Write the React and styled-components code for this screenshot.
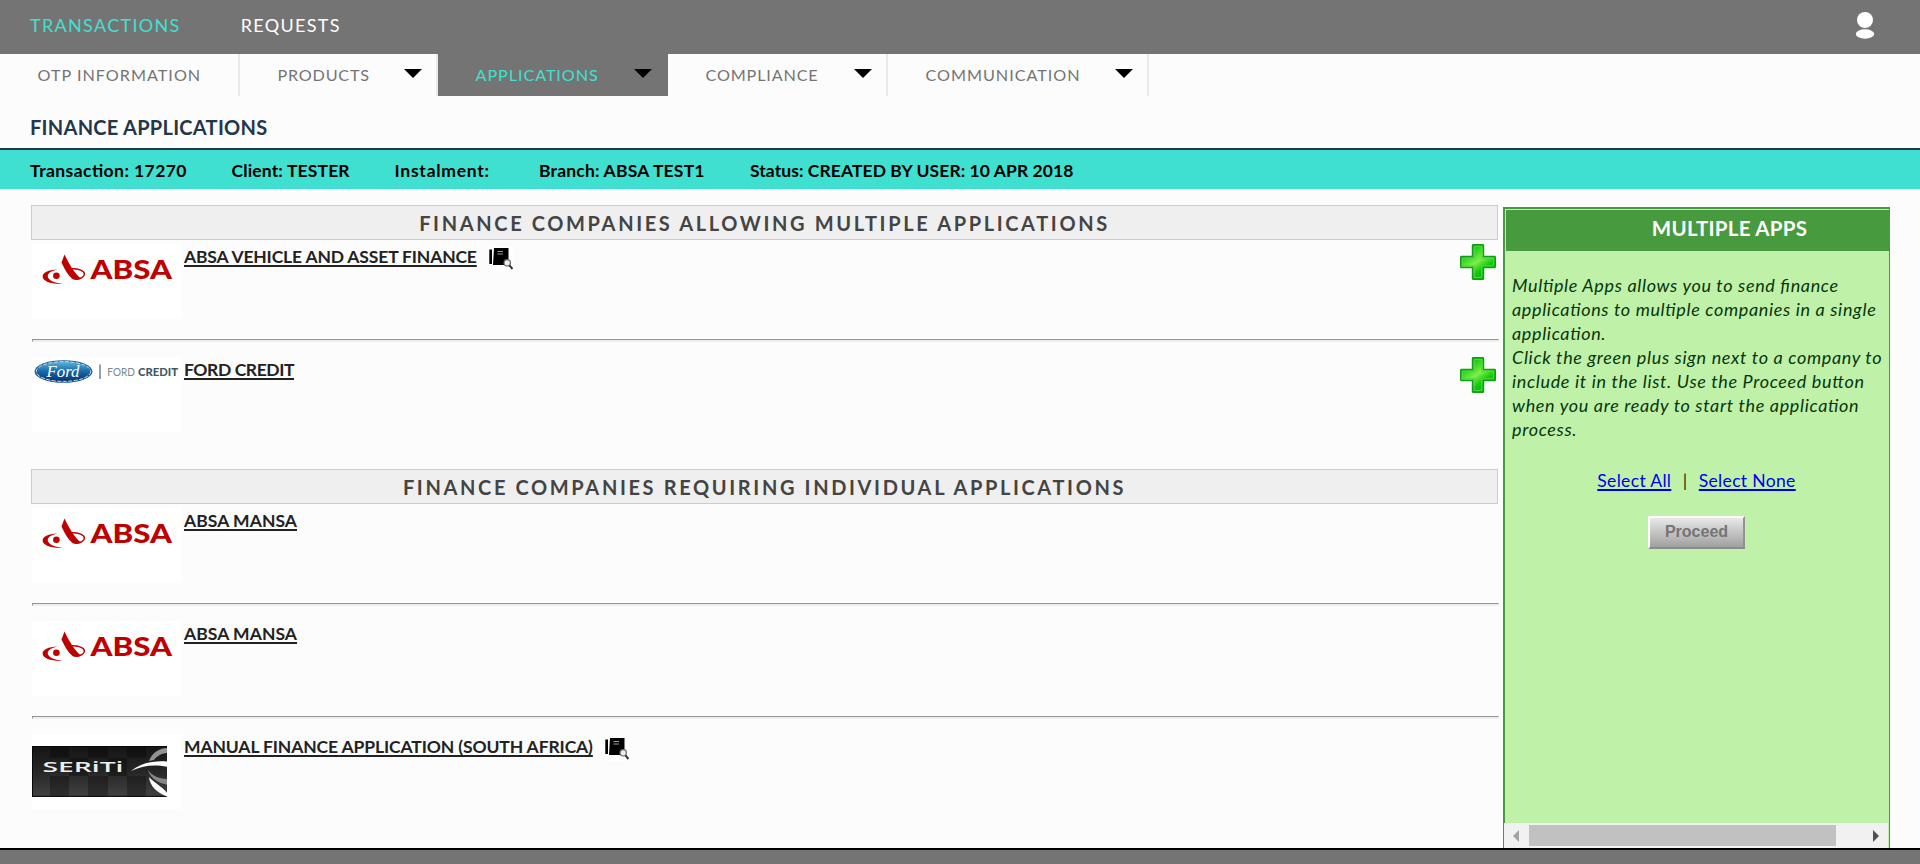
import React from 'react';
import styled, { createGlobalStyle, css } from 'styled-components';

const Global = createGlobalStyle`
  *, *::before, *::after { box-sizing: border-box; }
  body {
    margin: 0;
    background: #fcfcfc;
    font-family: Lato, "Liberation Sans", sans-serif;
    font-feature-settings: "liga" 1;
    color: #000;
    overflow: hidden;
  }
`;

const tracked = css`letter-spacing: ${(p) => p.$track || 0}px;`;

const Page = styled.div`
  display: flex;
  flex-direction: column;
  height: 864px;
`;

const TopBar = styled.header`
  display: flex;
  align-items: center;
  justify-content: space-between;
  flex: none;
  height: 54px;
  padding: 0 45px 4px 30px;
  background: #747474;
`;

const TopNav = styled.nav`
  display: flex;
  gap: 60px;
`;

const TopLink = styled.a`
  font-size: 18px;
  line-height: 24px;
  letter-spacing: 1.32px;
  color: ${(p) => (p.$active ? '#40e0d0' : '#fff')};
`;

const Tabs = styled.nav`
  display: flex;
  flex: none;
  height: 42px;
`;

const Tab = styled.a`
  display: flex;
  justify-content: space-between;
  width: ${(p) => p.$width}px;
  padding: 9px 14px 0 37.5px;
  border-right: 2px solid ${(p) => (p.$active ? '#747474' : '#e8e8e8')};
  background: ${(p) => (p.$active ? '#747474' : 'transparent')};
  color: ${(p) => (p.$active ? '#40e0d0' : '#747474')};
  font-size: 16.2px;
  line-height: 24px;
  white-space: nowrap;
  ${tracked}
`;

const Caret = styled.span`
  width: 0;
  height: 0;
  margin-top: 6px;
  border: 9px solid transparent;
  border-top-color: #000;
  border-bottom: 0;
`;

const Title = styled.h1`
  flex: none;
  height: 54px;
  margin: 0;
  padding: 18px 30px 0;
  border-bottom: 2px solid #24394d;
  color: #24364a;
  font-size: 20px;
  line-height: 26px;
  letter-spacing: 0.27px;
`;

const InfoBar = styled.div`
  display: grid;
  grid-template-columns: 201.5px 163px 144.5px 211px auto;
  flex: none;
  height: 39px;
  padding: 9px 30px 0;
  background: #40e0d0;
  font-size: 17.5px;
  font-weight: 700;
  line-height: 24px;
`;

const InfoItem = styled.span`
  white-space: nowrap;
  ${tracked}
`;

const Body = styled.div`
  display: flex;
  gap: 4px;
  flex: 1;
  min-height: 0;
  padding: 16px 30px 0 31px;
`;

const Companies = styled.main`
  display: flex;
  flex-direction: column;
  gap: 37px;
  width: 1468px;
`;

const SectionTitle = styled.h2`
  height: 35px;
  margin: 0 1px 4px 0;
  border: 1px solid #ccc;
  background: #efefef;
  color: #444;
  font-size: 20px;
  line-height: 34px;
  text-align: center;
  ${tracked}
`;

const Company = styled.article`
  display: flex;
  align-items: flex-start;
  height: 75px;
  margin-left: 1px;
  padding-right: 3px;
`;

const LogoBox = styled.div`
  width: 150px;
  height: 75px;
  margin-right: 2px;
  background: #fff;
`;

const CompanyLink = styled.a`
  margin-top: 1px;
  color: #222;
  font-size: 17.5px;
  font-weight: 700;
  line-height: 24px;
  text-decoration: underline;
  text-decoration-thickness: 2px;
  text-underline-offset: 2px;
  text-decoration-skip-ink: none;
  ${tracked}
`;

const Details = styled.span`
  width: 24px;
  height: 24px;
  margin: 3px 0 0 12px;
  background: #fff;
`;

const AddButton = styled.span`
  width: 36px;
  height: 36px;
  margin-left: auto;
`;

const Divider = styled.hr`
  height: 3px;
  margin: 20px 0 15px 1px;
  border: 1px solid #eee;
  border-top-color: #949494;
  border-left-color: #949494;
  background: #eee;
`;

const Panel = styled.aside`
  display: flex;
  flex-direction: column;
  width: 387px;
  margin-top: 2px;
  border: 2px solid #479a3e;
  border-right-width: 1px;
  border-bottom: 0;
  background: #bff2a8;
`;

const PanelTitle = styled.h2`
  height: 41px;
  margin: 1px 0 0 1px;
  padding: 5px 0 0 64px;
  background: #479a3e;
  color: #fff;
  font-size: 20.5px;
  line-height: 26px;
  letter-spacing: 0.25px;
  text-align: center;
`;

const Help = styled.p`
  margin: 22px 0 0;
  padding-left: 7px;
  color: #07360d;
  font-size: 18px;
  font-style: italic;
  line-height: 24px;
  letter-spacing: 0.65px;
  white-space: pre-line;
`;

const Choices = styled.div`
  display: flex;
  justify-content: center;
  gap: 11.5px;
  margin-top: 28px;
  padding-right: 1px;
  color: #07360d;
  font-size: 17.6px;
  line-height: 24px;
`;

const Choice = styled.a`
  color: #00e;
  letter-spacing: 0.3px;
  text-decoration: underline;
  text-decoration-thickness: 2px;
  text-underline-offset: 2px;
`;

const Proceed = styled.button`
  align-self: center;
  width: 97px;
  height: 33px;
  margin: 23px 1px 0 0;
  padding: 0 0 2px;
  border: 2px solid #fff;
  border-right-color: #929292;
  border-bottom-color: #8c8c8c;
  background: linear-gradient(#e8e8e8, #a0a0a0);
  color: #747474;
  font: 700 16px "Liberation Sans", Arial, sans-serif;
`;

const ScrollBar = styled.div`
  display: flex;
  align-items: center;
  height: 25px;
  margin: auto 1px 0 -1px;
  padding: 0 9px;
  background: #f1f1f1;
`;

const ScrollThumb = styled.div`
  width: 307px;
  height: 21px;
  margin: 0 auto 0 10px;
  background: #c1c1c1;
`;

const ScrollArrow = styled.span`
  width: 0;
  height: 0;
  border: 6px solid transparent;
  border-width: 6px 0;
  ${(p) => (p.$right ? 'border-left: 6px solid #505050;' : 'border-right: 6px solid #a3a3a3;')}
`;

const Footer = styled.footer`
  flex: none;
  height: 16px;
  border-top: 2px solid #000;
  background: #747474;
`;

const UserIcon = () => (
  <svg width="20" height="28" viewBox="0 0 20 28" fill="#fff">
    <circle cx="10" cy="9" r="8" />
    <ellipse cx="10" cy="23" rx="9.2" ry="4.7" />
  </svg>
);

const AbsaLogo = () => (
  <svg width="150" height="75" viewBox="0 0 150 75" fill="#be0000">
    <path d="M26 25.6C16 25.8 10.5 29 10.6 32.8C11 37.5 20 40.6 31.5 39.8C23 39 16.5 36.5 15.8 32.7C15.4 29 19 27.2 26 25.6Z" />
    <circle cx="24.4" cy="31.8" r="3.3" />
    <path d="M32.5 10.5L29.5 18.5C33 26 36 31.5 40.5 35Q44.5 37.4 49 34.2C43.5 31 37 20 32.5 10.5Z" />
    <path d="M38.5 24.8C47 24.4 52.5 27 52.4 30C52.2 33 48.5 35.2 44.5 35.2" fill="none" stroke="#be0000" strokeWidth="1.5" />
    <text x="58.5" y="34.8" fontFamily="Lato" fontWeight="900" fontSize="27" textLength="81.5" lengthAdjust="spacingAndGlyphs">ABSA</text>
  </svg>
);

const FordLogo = () => (
  <svg width="150" height="75" viewBox="0 0 150 75">
    <defs>
      <linearGradient id="ford" x1="0" y1="0" x2="0" y2="1">
        <stop offset="0" stopColor="#5fb4dc" />
        <stop offset="0.45" stopColor="#1b6fae" />
        <stop offset="1" stopColor="#0a2f6c" />
      </linearGradient>
    </defs>
    <ellipse cx="31.5" cy="14.5" rx="29" ry="11.3" fill="#1c5c98" />
    <ellipse cx="31.5" cy="14.5" rx="27.2" ry="9.9" fill="url(#ford)" stroke="#c5dfee" strokeWidth="1" strokeDasharray="4 1.5" />
    <text x="14.5" y="19.5" fill="#fff" fontFamily="Liberation Serif" fontStyle="italic" fontWeight="400" fontSize="17" textLength="33" lengthAdjust="spacingAndGlyphs">Ford</text>
    <path d="M68 7.5V22" stroke="#47657b" strokeWidth="1.2" />
    <text x="75.3" y="18.7" fill="#778894" fontFamily="Lato" fontSize="11" textLength="27.5" lengthAdjust="spacingAndGlyphs">FORD</text>
    <text x="106" y="18.7" fill="#3f5868" fontFamily="Lato" fontWeight="900" fontSize="11" textLength="40" lengthAdjust="spacingAndGlyphs">CREDIT</text>
  </svg>
);

const SeritiLogo = () => (
  <svg width="150" height="75" viewBox="0 0 150 75">
    <defs>
      <linearGradient id="seriti" x1="0" y1="0" x2="0" y2="1">
        <stop offset="0" stopColor="#151515" />
        <stop offset="0.5" stopColor="#262626" />
        <stop offset="1" stopColor="#424242" />
      </linearGradient>
      <clipPath id="plate"><path d="M0 12H135V63H0Z" /></clipPath>
    </defs>
    <path d="M0 12H135V63H0Z" fill="url(#seriti)" />
    <path d="M18 12H37V24H18ZM56 12H76V24H56ZM95 12H114V24H95ZM37 24H56V42H37ZM76 24H95V42H76ZM18 42H37V62H18ZM56 42H76V62H56ZM95 42H114V62H95Z" fill="#000" opacity="0.28" />
    <path d="M0 12.5H135M0.5 12V63M0 62.3H135" stroke="#080808" fill="none" />
    <g clipPath="url(#plate)">
      <path d="M117 27C120 19 127 14 136 14V19C130 19 125 22 122 26Z" fill="#919295" />
      <path d="M116 36C120 42 127 45 136 45V51C126 49 118 44 116 36Z" fill="#85868a" />
      <path d="M99 37C109 29 122 26 136 27.5V33C121 30 110 32 99 37Z" fill="#fff" />
      <path d="M117 43C122 49 130 52 136 60V63C126 59 118 53 117 43Z" fill="#fff" />
    </g>
    <text x="10.5" y="38.3" fill="#eee" fontFamily="Open Sans" fontWeight="600" fontSize="13.8" textLength="81" lengthAdjust="spacingAndGlyphs">SERiTi</text>
  </svg>
);

const DetailsIcon = () => (
  <svg width="24" height="24" viewBox="0 0 24 24">
    <path d="M0.3 2.5H3V17H0.3ZM5 1H19.5V13L15.5 18H4Z" fill="#000" />
    <path d="M8.5 4.5H14M8.5 7H14" stroke="#999" />
    <circle cx="18.2" cy="15.8" r="3.2" fill="#eee" stroke="#666" strokeWidth="1.2" />
    <path d="M20.5 18.3L23.5 22" stroke="#333" strokeWidth="2" />
  </svg>
);

const PlusIcon = () => (
  <svg width="36" height="36" viewBox="0 0 36 36">
    <defs>
      <linearGradient id="plus" x1="0.15" y1="0" x2="0.85" y2="1">
        <stop offset="0.15" stopColor="#08c808" />
        <stop offset="0.48" stopColor="#80ee48" />
        <stop offset="0.7" stopColor="#10c80c" />
        <stop offset="1" stopColor="#04b404" />
      </linearGradient>
    </defs>
    <path d="M13 0.7H23L23.5 1.2V12.5H34.8L35.3 13V23L34.8 23.5H23.5V34.8L23 35.3H13L12.5 34.8V23.5H1.2L0.7 23V13L1.2 12.5H12.5V1.2Z" fill="url(#plus)" stroke="#119e15" strokeWidth="1.4" />
    <path d="M14.3 2.5H21.7V14.3H33.5V21.7H21.7V33.5H14.3V21.7H2.5V14.3H14.3Z" fill="none" stroke="#4fd44a" strokeWidth="1" />
  </svg>
);

const tabs = [
  { label: 'OTP INFORMATION', width: 240, track: 1 },
  { label: 'PRODUCTS', width: 198, track: 0.78, menu: true },
  { label: 'APPLICATIONS', width: 230, track: 0.93, menu: true, active: true },
  { label: 'COMPLIANCE', width: 220, track: 0.84, menu: true },
  { label: 'COMMUNICATION', width: 261, track: 0.97, menu: true },
];

const info = [
  ['Transaction: 17270', 0.43],
  ['Client: TESTER', 0.15],
  ['Instalment:', 0.75],
  ['Branch: ABSA TEST1', 0.2],
  ['Status: CREATED BY USER: 10 APR 2018', 0.07],
];

const sections = [
  {
    title: 'FINANCE COMPANIES ALLOWING MULTIPLE APPLICATIONS',
    track: 2.63,
    rows: [
      { name: 'ABSA VEHICLE AND ASSET FINANCE', track: -0.16, Logo: AbsaLogo, details: true, add: true },
      { name: 'FORD CREDIT', track: -0.42, Logo: FordLogo, add: true },
    ],
  },
  {
    title: 'FINANCE COMPANIES REQUIRING INDIVIDUAL APPLICATIONS',
    track: 2.63,
    rows: [
      { name: 'ABSA MANSA', track: 0.05, Logo: AbsaLogo },
      { name: 'ABSA MANSA', track: 0.05, Logo: AbsaLogo },
      { name: 'MANUAL FINANCE APPLICATION (SOUTH AFRICA)', track: -0.12, Logo: SeritiLogo, details: true },
    ],
  },
];

const help = `Multiple Apps allows you to send finance
applications to multiple companies in a single
application.
Click the green plus sign next to a company to
include it in the list. Use the Proceed button
when you are ready to start the application
process.`;

export default function App() {
  return (
    <Page>
      <Global />
      <TopBar>
        <TopNav>
          <TopLink $active>TRANSACTIONS</TopLink>
          <TopLink>REQUESTS</TopLink>
        </TopNav>
        <UserIcon />
      </TopBar>
      <Tabs>
        {tabs.map((t) => (
          <Tab key={t.label} $width={t.width} $track={t.track} $active={t.active}>
            {t.label}
            {t.menu && <Caret />}
          </Tab>
        ))}
      </Tabs>
      <Title>FINANCE APPLICATIONS</Title>
      <InfoBar>
        {info.map(([text, track]) => (
          <InfoItem key={text} $track={track}>{text}</InfoItem>
        ))}
      </InfoBar>
      <Body>
        <Companies>
          {sections.map((s) => (
            <section key={s.title}>
              <SectionTitle $track={s.track}>{s.title}</SectionTitle>
              {s.rows.map(({ name, track, Logo, details, add }, i) => (
                <React.Fragment key={i}>
                  {i > 0 && <Divider />}
                  <Company>
                    <LogoBox><Logo /></LogoBox>
                    <CompanyLink $track={track}>{name}</CompanyLink>
                    {details && <Details><DetailsIcon /></Details>}
                    {add && <AddButton><PlusIcon /></AddButton>}
                  </Company>
                </React.Fragment>
              ))}
            </section>
          ))}
        </Companies>
        <Panel>
          <PanelTitle>MULTIPLE APPS</PanelTitle>
          <Help>{help}</Help>
          <Choices>
            <Choice>Select All</Choice>
            <span>|</span>
            <Choice>Select None</Choice>
          </Choices>
          <Proceed>Proceed</Proceed>
          <ScrollBar>
            <ScrollArrow />
            <ScrollThumb />
            <ScrollArrow $right />
          </ScrollBar>
        </Panel>
      </Body>
      <Footer />
    </Page>
  );
}
